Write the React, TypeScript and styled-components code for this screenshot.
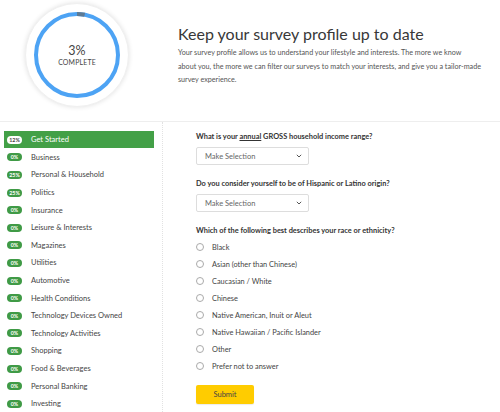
import styled, { createGlobalStyle } from 'styled-components';

const GlobalStyle = createGlobalStyle`
  html, body {
    margin: 0;
    padding: 0;
    background: #fff;
    font-family: Lato, 'Open Sans', sans-serif;
    color: #444;
    overflow: hidden;
  }
`;

const Page = styled.div`
  width: 500px;
  height: 412px;
  overflow: hidden;
`;

const Header = styled.header`
  display: flex;
  height: 121px;
  border-bottom: 1px solid #eee;
`;

const ProgressColumn = styled.div`
  width: 178px;
  flex-shrink: 0;
  padding: 3px 0 0 25px;
  box-sizing: border-box;
`;

const ProgressOuter = styled.div`
  position: relative;
  width: 104px;
  height: 104px;
  border-radius: 50%;
  background: #fff;
  box-shadow: 0 0 5px rgba(0, 0, 0, 0.12);
  border: 1px solid #f0f0f0;
  box-sizing: border-box;
  display: flex;
  align-items: center;
  justify-content: center;
`;

const Ring = styled.svg`
  position: absolute;
  inset: 0;
`;

const ProgressText = styled.div`
  display: flex;
  flex-direction: column;
  align-items: center;
  color: #444;
  margin-top: 1px;
`;

const Percent = styled.span`
  font-size: 12.5px;
  line-height: 14px;
`;

const Complete = styled.span`
  font-size: 6.9px;
  line-height: 9px;
  letter-spacing: 0.2px;
`;

const Intro = styled.div`
  padding-top: 24px;
  padding-right: 2px;
`;

const Title = styled.h1`
  margin: 0 0 2px;
  font-size: 16px;
  font-weight: 400;
  color: #383838;
  line-height: 20px;
`;

const Lead = styled.p`
  margin: 0;
  font-size: 7.2px;
  line-height: 13.5px;
  color: #555;
`;

const Body = styled.div`
  display: flex;
`;

const Sidebar = styled.nav`
  width: 163px;
  flex-shrink: 0;
  border-right: 1px dotted #e2e2e2;
  padding-top: 9px;
  height: 300px;
  box-sizing: border-box;
`;

const NavItem = styled.div<{ $active?: boolean }>`
  display: flex;
  align-items: center;
  margin: 0 8px 0 4px;
  padding-left: 3px;
  height: ${p => (p.$active ? '17px' : '17.6px')};
  margin-bottom: ${p => (p.$active ? '0.6px' : '0')};
  background: ${p => (p.$active ? '#43a047' : 'transparent')};
  color: ${p => (p.$active ? '#fff' : '#444')};
  font-size: 7.5px;
`;

const BadgeSlot = styled.div`
  width: 24px;
  flex-shrink: 0;
  display: flex;
`;

const Badge = styled.span<{ $active?: boolean }>`
  display: inline-flex;
  align-items: center;
  justify-content: center;
  min-width: 15px;
  padding: 0 2px;
  box-sizing: border-box;
  height: 8px;
  border-radius: 4px;
  font-size: 5.3px;
  font-weight: 700;
  background: ${p => (p.$active ? '#fff' : '#3f9a46')};
  color: ${p => (p.$active ? '#444' : '#fff')};
`;

const Content = styled.main`
  padding: 10px 0 0 33px;
`;

const Question = styled.div`
  font-size: 7.4px;
  font-weight: 700;
  color: #333;
  line-height: 10px;
`;

const Underline = styled.span`
  text-decoration: underline;
`;

const Select = styled.div`
  margin: 5px 0 14px;
  width: 113px;
  height: 18px;
  border: 1px solid #ddd;
  border-radius: 2px;
  box-sizing: border-box;
  display: flex;
  align-items: center;
  justify-content: space-between;
  padding: 0 6px 0 8px;
  font-size: 7.5px;
  color: #666;
`;

const RadioList = styled.div`
  margin-top: 2.5px;
  display: flex;
  flex-direction: column;
`;

const RadioRow = styled.label`
  display: flex;
  align-items: center;
  height: 17px;
  font-size: 7.4px;
  color: #444;
`;

const RadioDot = styled.span`
  width: 6px;
  height: 6px;
  border: 1px solid #aaa;
  border-radius: 50%;
  margin-right: 8px;
`;

const SubmitButton = styled.button`
  display: block;
  margin-top: 10.5px;
  width: 58px;
  height: 19px;
  border: none;
  border-radius: 2px;
  background: #ffcc00;
  color: #444;
  font-family: inherit;
  font-size: 7.5px;
  padding: 0;
  box-shadow: 0 1px 1px rgba(0, 0, 0, 0.08);
`;

const sections = [
  { label: 'Get Started', pct: 12 },
  { label: 'Business', pct: 0 },
  { label: 'Personal & Household', pct: 25 },
  { label: 'Politics', pct: 25 },
  { label: 'Insurance', pct: 0 },
  { label: 'Leisure & Interests', pct: 0 },
  { label: 'Magazines', pct: 0 },
  { label: 'Utilities', pct: 0 },
  { label: 'Automotive', pct: 0 },
  { label: 'Health Conditions', pct: 0 },
  { label: 'Technology Devices Owned', pct: 0 },
  { label: 'Technology Activities', pct: 0 },
  { label: 'Shopping', pct: 0 },
  { label: 'Food & Beverages', pct: 0 },
  { label: 'Personal Banking', pct: 0 },
  { label: 'Investing', pct: 0 },
];

const races = [
  'Black',
  'Asian (other than Chinese)',
  'Caucasian / White',
  'Chinese',
  'Native American, Inuit or Aleut',
  'Native Hawaiian / Pacific Islander',
  'Other',
  'Prefer not to answer',
];

const Chevron = () => (
  <svg width="6" height="4" viewBox="0 0 6 4">
    <path d="M0.8 0.8 L3 3 L5.2 0.8" fill="none" stroke="#555" strokeWidth="1" />
  </svg>
);

const ProgressRing = ({ pct }: { pct: number }) => {
  const r = 41;
  const c = 2 * Math.PI * r;
  const done = (c * pct) / 100;
  return (
    <Ring width="102" height="102" viewBox="0 0 102 102">
      <circle cx="51" cy="51" r={r} fill="none" stroke="#4da3f4" strokeWidth="4" />
      <circle
        cx="51"
        cy="51"
        r={r}
        fill="none"
        stroke="#5d7a94"
        strokeWidth="4"
        strokeDasharray={`${done} ${c}`}
        transform="rotate(-90 51 51)"
      />
    </Ring>
  );
};

export default function App() {
  return (
    <Page>
      <GlobalStyle />
      <Header>
        <ProgressColumn>
          <ProgressOuter>
            <ProgressRing pct={3} />
            <ProgressText>
              <Percent>3%</Percent>
              <Complete>COMPLETE</Complete>
            </ProgressText>
          </ProgressOuter>
        </ProgressColumn>
        <Intro>
          <Title>Keep your survey profile up to date</Title>
          <Lead>
            Your survey profile allows us to understand your lifestyle and interests. The more we know
            <br />
            about you, the more we can filter our surveys to match your interests, and give you a
            tailor-made survey experience.
          </Lead>
        </Intro>
      </Header>
      <Body>
        <Sidebar>
          {sections.map((s, i) => (
            <NavItem key={s.label} $active={i === 0}>
              <BadgeSlot>
                <Badge $active={i === 0}>{s.pct}%</Badge>
              </BadgeSlot>
              {s.label}
            </NavItem>
          ))}
        </Sidebar>
        <Content>
          <Question>
            What is your <Underline>annual</Underline> GROSS household income range?
          </Question>
          <Select>
            Make Selection
            <Chevron />
          </Select>
          <Question>Do you consider yourself to be of Hispanic or Latino origin?</Question>
          <Select>
            Make Selection
            <Chevron />
          </Select>
          <Question>Which of the following best describes your race or ethnicity?</Question>
          <RadioList>
            {races.map(r => (
              <RadioRow key={r}>
                <RadioDot />
                {r}
              </RadioRow>
            ))}
          </RadioList>
          <SubmitButton>Submit</SubmitButton>
        </Content>
      </Body>
    </Page>
  );
}
